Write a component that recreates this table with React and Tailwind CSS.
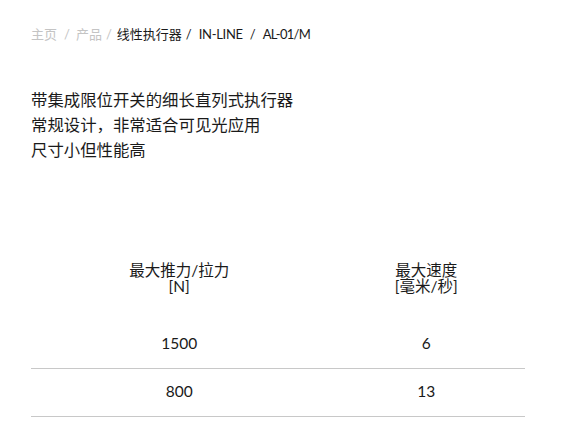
export default function App() {
  const font = { fontFamily: '"Lato", "Noto Sans CJK SC", sans-serif' };
  return (
    <div className="w-[566px] h-[438px] bg-white text-[#1a1a1a] overflow-hidden" style={font}>
      <div className="pl-[31px] pr-[41px]">
        <div className="pt-[25px] text-[13px] leading-[18px] flex items-center">
          <span className="text-[#c4c4c4]">主页</span>
          <span className="text-[#c4c4c4] pl-[7px] pr-[6px]">/</span>
          <span className="text-[#c4c4c4]">产品</span>
          <span className="text-[#c4c4c4] pl-[4px] pr-[5px]">/</span>
          <span>线性执行器</span>
          <span className="pl-[4px] pr-[7px]">/</span>
          <span className="tracking-[-0.3px]">IN-LINE</span>
          <span className="pl-[7px] pr-[7px]">/</span>
          <span className="tracking-[-0.7px]">AL-01/M</span>
        </div>
        <div className="mt-[44px] text-[16.4px] leading-[25px]">
          <p>带集成限位开关的细长直列式执行器</p>
          <p>常规设计，非常适合可见光应用</p>
          <p>尺寸小但性能高</p>
        </div>
        <table className="mt-[100px] w-full text-[15.5px] border-collapse">
          <thead>
            <tr>
              <th className="w-[60%] font-normal leading-[16px] pb-[26px] text-center">最大推力/拉力<br />[N]</th>
              <th className="w-[40%] font-normal leading-[16px] pb-[26px] text-center">最大速度<br />[毫米/秒]</th>
            </tr>
          </thead>
          <tbody>
            <tr className="border-b border-[#c8c8c8]">
              <td className="h-[48px] text-center">1500</td>
              <td className="text-center">6</td>
            </tr>
            <tr className="border-b border-[#c8c8c8]">
              <td className="h-[48px] text-center">800</td>
              <td className="text-center">13</td>
            </tr>
          </tbody>
        </table>
      </div>
    </div>
  );
}
